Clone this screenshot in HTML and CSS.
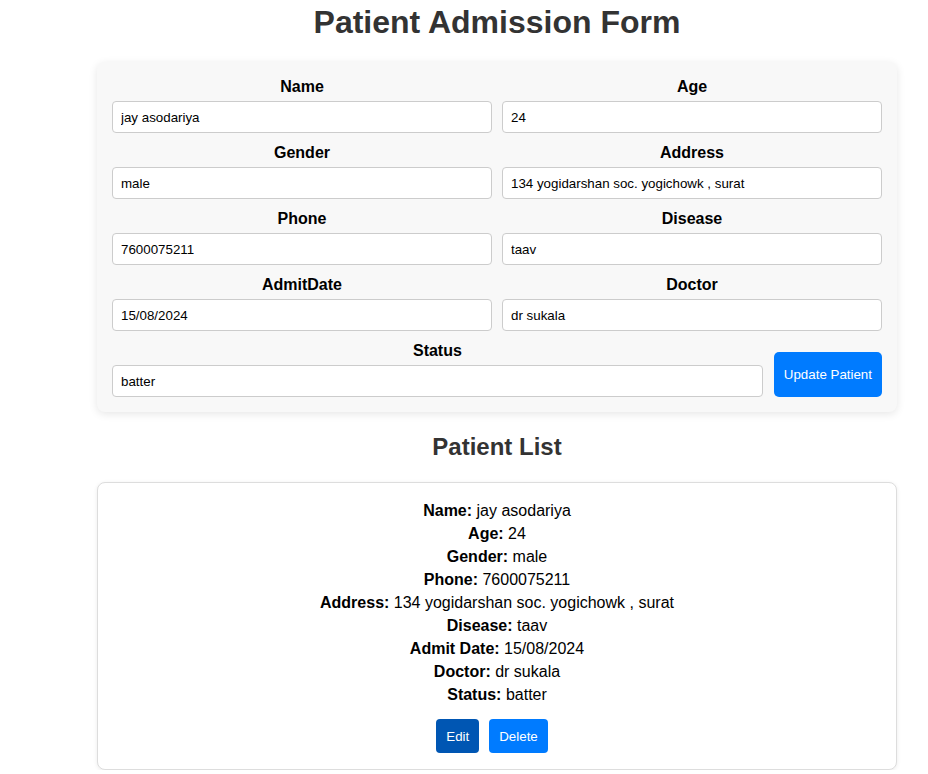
FILE: index.html
```html
<!DOCTYPE html>
<html>
<head>
<meta charset="utf-8">
<link rel="stylesheet" href="styles.css">
</head>
<body>
<div class="page">
  <h1 class="title">Patient Admission Form</h1>
  <form class="form-card">
    <div class="grid">
      <div class="field"><label>Name</label><input type="text" value="jay asodariya"></div>
      <div class="field"><label>Age</label><input type="text" value="24"></div>
      <div class="field"><label>Gender</label><input type="text" value="male"></div>
      <div class="field"><label>Address</label><input type="text" value="134 yogidarshan soc. yogichowk , surat"></div>
      <div class="field"><label>Phone</label><input type="text" value="7600075211"></div>
      <div class="field"><label>Disease</label><input type="text" value="taav"></div>
      <div class="field"><label>AdmitDate</label><input type="text" value="15/08/2024"></div>
      <div class="field"><label>Doctor</label><input type="text" value="dr sukala"></div>
    </div>
    <div class="last-row">
      <div class="field grow"><label>Status</label><input type="text" value="batter"></div>
      <button type="button" class="btn btn-submit">Update Patient</button>
    </div>
  </form>

  <h2 class="subtitle">Patient List</h2>
  <div class="patient-card">
    <div class="line"><b>Name:</b> jay asodariya</div>
    <div class="line"><b>Age:</b> 24</div>
    <div class="line"><b>Gender:</b> male</div>
    <div class="line"><b>Phone:</b> 7600075211</div>
    <div class="line"><b>Address:</b> 134 yogidarshan soc. yogichowk , surat</div>
    <div class="line"><b>Disease:</b> taav</div>
    <div class="line"><b>Admit Date:</b> 15/08/2024</div>
    <div class="line"><b>Doctor:</b> dr sukala</div>
    <div class="line"><b>Status:</b> batter</div>
    <div class="actions">
      <button type="button" class="btn btn-edit">Edit</button>
      <button type="button" class="btn btn-delete">Delete</button>
    </div>
  </div>
</div>
</body>
</html>
```

FILE: styles.css
```css
html, body {
  margin: 0;
  padding: 0;
  background: #fff;
  font-family: "Liberation Sans", Arial, sans-serif;
  color: #000;
}

.page {
  width: 800px;
  margin-left: 97px;
}

.title {
  margin: 4px 0 21px;
  font-size: 32px;
  font-weight: bold;
  line-height: 37px;
  color: #333;
  text-align: center;
}

.form-card {
  background: #f8f8f8;
  border-radius: 8px;
  box-shadow: 0 2px 8px rgba(0, 0, 0, 0.1);
  padding: 15px;
}

.grid {
  display: grid;
  grid-template-columns: 1fr 1fr;
  column-gap: 10px;
  row-gap: 10px;
}

.field {
  display: flex;
  flex-direction: column;
}

.field label {
  font-size: 16px;
  font-weight: bold;
  line-height: 19px;
  text-align: center;
  margin-bottom: 5px;
}

.field input {
  box-sizing: border-box;
  height: 32px;
  padding: 0 8px;
  border: 1px solid #ccc;
  border-radius: 4px;
  background: #fff;
  font-family: "Liberation Sans", Arial, sans-serif;
  font-size: 13.33px;
  color: #000;
}

.last-row {
  display: flex;
  align-items: flex-end;
  gap: 11px;
  margin-top: 10px;
}

.grow {
  flex: 1;
}

.btn {
  border: none;
  color: #fff;
  font-family: "Liberation Sans", Arial, sans-serif;
  font-size: 13.33px;
  border-radius: 4px;
  cursor: pointer;
}

.btn-submit {
  background: #007bff;
  padding: 0 10px;
  height: 45px;
  border-radius: 5px;
}

.subtitle {
  margin: 21px 0 21px;
  font-size: 24px;
  font-weight: bold;
  line-height: 28px;
  color: #333;
  text-align: center;
}

.patient-card {
  background: #fff;
  border: 1px solid #ddd;
  border-radius: 8px;
  box-shadow: 0 1px 4px rgba(0, 0, 0, 0.08);
  padding: 16px;
  text-align: center;
}

.line {
  font-size: 16px;
  line-height: 23px;
}

.actions {
  display: flex;
  justify-content: center;
  margin-top: 13px;
}

.btn-edit,
.btn-delete {
  height: 34px;
  padding: 0 10px;
  margin-right: 10px;
}

.btn-edit {
  background: #0056b3;
}

.btn-delete {
  background: #007bff;
}
```
